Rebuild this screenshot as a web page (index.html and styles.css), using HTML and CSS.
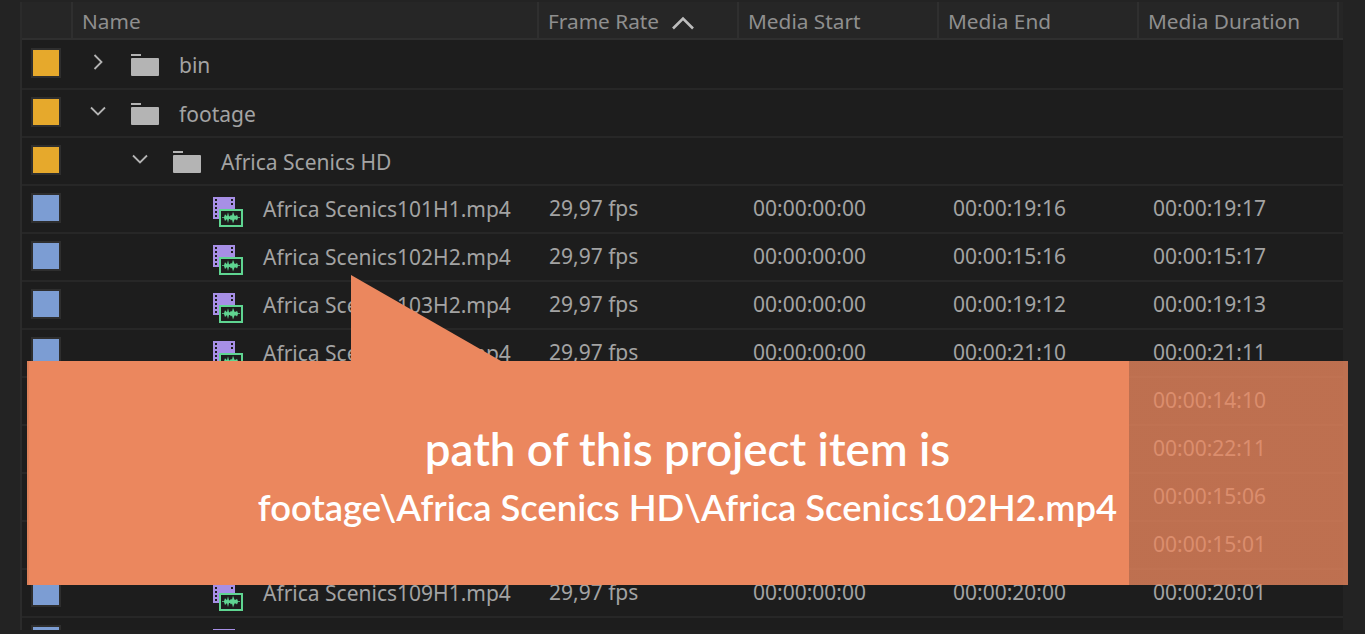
FILE: index.html
```html
<!DOCTYPE html>
<html lang="en">
<head>
    <meta charset="UTF-8">
    <title>Project panel</title>
    <link rel="stylesheet" href="styles.css">
</head>
<body>
    <svg class="defs" width="0" height="0">
        <symbol id="folder" viewBox="0 0 28 22">
            <rect x="0" y="0" width="10" height="2" fill="#b4b4b4"/>
            <rect x="0" y="4" width="28" height="18" rx="1" fill="#b4b4b4"/>
        </symbol>
        <symbol id="clip" viewBox="0 0 30 30">
            <rect x="0" y="0" width="22" height="22" fill="#a78fe6"/>
            <path d="M2 2h2v2H2zM2 6h2v2H2zM2 10h2v2H2zM2 14h2v2H2zM2 18h2v2H2zM18 2h2v2h-2zM18 6h2v2h-2z" fill="#1d1d1d"/>
            <rect x="7" y="13" width="22" height="16" fill="#1d1d1d" stroke="#5fd591" stroke-width="2"/>
            <path d="M9 20.300h2l1-3 2 2 1-4 1 4h1l1-1.500 1 1 1-4 1.500 4h1.500l1-1 1 2.500h2v.800h-2l-1 2.500-1-1h-1.500l-1.500 4-1-4-1 1-1-1.500h-1l-1 4-1-4-2 2-1-3h-2z" fill="#5fd591"/>
        </symbol>
        <symbol id="chev-right" viewBox="0 0 18 18">
            <path d="M5.500 2l7 7-7 7" fill="none" stroke="#b4b4b4" stroke-width="1.800"/>
        </symbol>
        <symbol id="chev-down" viewBox="0 0 18 18">
            <path d="M2 5.500l7 7 7-7" fill="none" stroke="#b4b4b4" stroke-width="1.800"/>
        </symbol>
    </svg>

    <div class="panel">
        <div class="row header">
            <div class="cell"></div>
            <div class="cell">Name</div>
            <div class="cell">Frame Rate
                <svg class="sort" width="24" height="14" viewBox="0 0 24 14"><path d="M2 12.500l10-10 10 10" fill="none" stroke="#bdbdbd" stroke-width="2.600"/></svg>
            </div>
            <div class="cell">Media Start</div>
            <div class="cell">Media End</div>
            <div class="cell">Media Duration</div>
        </div>

        <div class="row first">
            <div class="cell"><span class="swatch yellow"></span></div>
            <div class="cell name depth-0">
                <svg class="toggle"><use href="#chev-right"/></svg>
                <svg class="folder"><use href="#folder"/></svg>
                <span>bin</span>
            </div>
        </div>
        <div class="row">
            <div class="cell"><span class="swatch yellow"></span></div>
            <div class="cell name depth-0">
                <svg class="toggle"><use href="#chev-down"/></svg>
                <svg class="folder"><use href="#folder"/></svg>
                <span>footage</span>
            </div>
        </div>
        <div class="row">
            <div class="cell"><span class="swatch yellow"></span></div>
            <div class="cell name depth-1">
                <svg class="toggle"><use href="#chev-down"/></svg>
                <svg class="folder"><use href="#folder"/></svg>
                <span>Africa Scenics HD</span>
            </div>
        </div>

        <div class="row">
            <div class="cell"><span class="swatch blue"></span></div>
            <div class="cell name depth-2"><svg class="clip"><use href="#clip"/></svg><span>Africa Scenics101H1.mp4</span></div>
            <div class="cell rate">29,97 fps</div>
            <div class="cell time">00:00:00:00</div>
            <div class="cell time">00:00:19:16</div>
            <div class="cell time">00:00:19:17</div>
        </div>
        <div class="row">
            <div class="cell"><span class="swatch blue"></span></div>
            <div class="cell name depth-2"><svg class="clip"><use href="#clip"/></svg><span>Africa Scenics102H2.mp4</span></div>
            <div class="cell rate">29,97 fps</div>
            <div class="cell time">00:00:00:00</div>
            <div class="cell time">00:00:15:16</div>
            <div class="cell time">00:00:15:17</div>
        </div>
        <div class="row">
            <div class="cell"><span class="swatch blue"></span></div>
            <div class="cell name depth-2"><svg class="clip"><use href="#clip"/></svg><span>Africa Scenics103H2.mp4</span></div>
            <div class="cell rate">29,97 fps</div>
            <div class="cell time">00:00:00:00</div>
            <div class="cell time">00:00:19:12</div>
            <div class="cell time">00:00:19:13</div>
        </div>
        <div class="row">
            <div class="cell"><span class="swatch blue"></span></div>
            <div class="cell name depth-2"><svg class="clip"><use href="#clip"/></svg><span>Africa Scenics104H2.mp4</span></div>
            <div class="cell rate">29,97 fps</div>
            <div class="cell time">00:00:00:00</div>
            <div class="cell time">00:00:21:10</div>
            <div class="cell time">00:00:21:11</div>
        </div>
        <div class="row">
            <div class="cell"></div><div class="cell"></div><div class="cell"></div><div class="cell"></div><div class="cell"></div>
            <div class="cell time">00:00:14:10</div>
        </div>
        <div class="row">
            <div class="cell"></div><div class="cell"></div><div class="cell"></div><div class="cell"></div><div class="cell"></div>
            <div class="cell time">00:00:22:11</div>
        </div>
        <div class="row">
            <div class="cell"></div><div class="cell"></div><div class="cell"></div><div class="cell"></div><div class="cell"></div>
            <div class="cell time">00:00:15:06</div>
        </div>
        <div class="row">
            <div class="cell"></div><div class="cell"></div><div class="cell"></div><div class="cell"></div><div class="cell"></div>
            <div class="cell time">00:00:15:01</div>
        </div>
        <div class="row">
            <div class="cell"><span class="swatch blue"></span></div>
            <div class="cell name depth-2"><svg class="clip"><use href="#clip"/></svg><span>Africa Scenics109H1.mp4</span></div>
            <div class="cell rate">29,97 fps</div>
            <div class="cell time">00:00:00:00</div>
            <div class="cell time">00:00:20:00</div>
            <div class="cell time">00:00:20:01</div>
        </div>
        <div class="row">
            <div class="cell"><span class="swatch blue"></span></div>
            <div class="cell name depth-2"><svg class="clip"><use href="#clip"/></svg></div>
        </div>
    </div>

    <!-- callout over the list -->
    <div class="callout">
        <svg class="pointer" width="150" height="86" viewBox="0 0 150 86"><path d="M0 0L150 86H0z" fill="#eb875e"/></svg>
        <p class="callout-title">path of this project item is</p>
        <p class="callout-path">footage\Africa Scenics HD\Africa Scenics102H2.mp4</p>
    </div>
</body>
</html>
```

FILE: styles.css
```css
html, body {
    margin: 0;
    height: 634px;
    overflow: hidden;
}

body {
    background-color: #232323;
    font-family: "Noto Sans", "Open Sans", sans-serif;
    font-size: 21px;
    color: #a3a3a3;
}

.defs {
    position: absolute;
}

.panel {
    margin-left: 20px;
    margin-top: 2px;
    width: 1323px;
    height: 628px;
    overflow: hidden;
    background-color: #1d1d1d;
    border-left: 2px solid #2b2b2b;
    box-sizing: border-box;
}

.row {
    display: grid;
    grid-template-columns: 51px 466px 200px 200px 200px 200px;
    height: 48px;
    border-bottom: 2px solid #272727;
    box-sizing: border-box;
}

.row.first {
    height: 50px;
}

.row.header {
    height: 38px;
    background-color: #262626;
    border-bottom: 2px solid #2f2f2f;
    color: #8f8f8f;
    font-size: 20.8px;
}

.header .cell {
    border-right: 2px solid #2f2f2f;
    padding-left: 9px;
    padding-top: 1px;
}

.header .cell:first-child {
    padding-left: 0;
}

.cell {
    display: flex;
    align-items: center;
    box-sizing: border-box;
    min-width: 0;
    white-space: nowrap;
}

.sort {
    margin-left: 12px;
    margin-top: 5px;
}

.swatch {
    width: 26px;
    height: 26px;
    margin-left: 9px;
    margin-bottom: 2px;
    border: 2px solid #2e2e2e;
    box-sizing: content-box;
}

.yellow {
    background-color: #e6a92c;
}

.blue {
    background-color: #7c9dd3;
}

.name {
    padding-left: 16px;
}

.depth-1 {
    padding-left: 58px;
}

.depth-2 {
    padding-left: 140px;
}

.toggle {
    width: 18px;
    height: 18px;
    margin-right: 24px;
    margin-bottom: 5px;
}

.folder {
    width: 28px;
    height: 22px;
    margin-right: 20px;
    margin-top: 2px;
}

.folder + span {
    padding-top: 2px;
}

.clip {
    width: 30px;
    height: 30px;
    margin-right: 20px;
    margin-top: 6px;
}

.rate {
    padding-left: 10px;
    padding-bottom: 2px;
}

.time {
    padding-left: 14px;
    padding-bottom: 2px;
}

.callout {
    position: absolute;
    left: 27px;
    top: 361px;
    width: 1321px;
    height: 224px;
    padding-top: 59px;
    box-sizing: border-box;
    background: linear-gradient(to right,
        #db8059 2px, #eb875e 2px,
        #eb875e 1102px, rgba(235, 135, 94, 0.78) 1102px);
    color: #fff;
    text-align: center;
    font-family: "Lato", "Open Sans", sans-serif;
}

.pointer {
    position: absolute;
    left: 324px;
    top: -86px;
}

.callout-title {
    margin: 0;
    font-size: 45.7px;
    line-height: 57px;
    font-weight: 600;
}

.callout-path {
    margin: 0;
    font-size: 36.4px;
    line-height: 60px;
    font-weight: 600;
}
```
